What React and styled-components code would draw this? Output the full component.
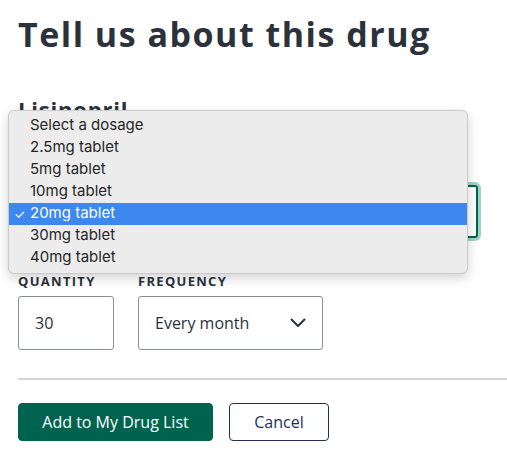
import React from "react";
import styled, { createGlobalStyle } from "styled-components";

const Global = createGlobalStyle`
  html, body { margin: 0; padding: 0; background: #fff; }
  body { font-family: "Open Sans", "Liberation Sans", sans-serif; color: #2b323b; }
  * { box-sizing: border-box; }
`;

const Page = styled.div`
  position: relative;
  width: 507px;
  height: 451px;
  overflow: hidden;
  padding: 14px 0 0 18px;
`;

const Heading = styled.h1`
  margin: 0;
  font-family: "Open Sans", sans-serif;
  font-weight: 700;
  font-size: 34px;
  line-height: 40px;
  letter-spacing: 1.5px;
  color: #2b323b;
`;

const DrugName = styled.h2`
  margin: 42px 0 0 0;
  font-family: "Open Sans", sans-serif;
  font-weight: 700;
  font-size: 22px;
  line-height: 26px;
  letter-spacing: 0.8px;
  color: #2b323b;
`;

const DosageSelect = styled.div`
  margin-top: 63px;
  width: 460px;
  height: 53px;
  border: 2px solid #00634f;
  border-radius: 3px;
  box-shadow: 0 0 0 3px #9fd2c5;
`;

const Row = styled.div`
  display: flex;
  gap: 24px;
  margin-top: 36px;
`;

const Field = styled.div`
  display: flex;
  flex-direction: column;
  gap: 7px;
`;

const Label = styled.div`
  font-family: "Open Sans", sans-serif;
  font-weight: 700;
  font-size: 13px;
  line-height: 15px;
  letter-spacing: 1.3px;
  text-transform: uppercase;
  color: #2b323b;
`;

const Box = styled.div`
  width: ${(p) => p.$w}px;
  height: 54px;
  border: 1px solid #8a8f96;
  border-radius: 3px;
  display: flex;
  align-items: center;
  justify-content: space-between;
  padding: 0 16px 0 16px;
  font-family: "Open Sans", sans-serif;
  font-size: 16px;
  color: #2b323b;
`;

const Divider = styled.hr`
  margin: 28px 0 0 0;
  border: none;
  height: 2px;
  background: #d6d6d6;
`;

const Buttons = styled.div`
  display: flex;
  gap: 16px;
  margin-top: 23px;
`;

const Button = styled.button`
  height: 38px;
  width: ${(p) => p.$w}px;
  border-radius: 4px;
  font-family: "Open Sans", sans-serif;
  font-size: 16px;
  font-weight: 500;
  cursor: pointer;
  border: 1px solid ${(p) => (p.$primary ? "#00634f" : "#1d2f5c")};
  background: ${(p) => (p.$primary ? "#00634f" : "#fff")};
  color: ${(p) => (p.$primary ? "#fff" : "#1d2f5c")};
`;

const Menu = styled.ul`
  position: absolute;
  left: 8px;
  top: 110px;
  width: 460px;
  margin: 0;
  padding: 4px 0 4px;
  list-style: none;
  background: #ececec;
  border: 1px solid rgba(0, 0, 0, 0.14);
  border-radius: 6px;
  box-shadow: 0 4px 12px rgba(0, 0, 0, 0.18);
  font-family: Inter, "Liberation Sans", sans-serif;
  font-size: 15px;
`;

const Item = styled.li`
  position: relative;
  height: 22px;
  line-height: 20px;
  padding-left: 21px;
  color: ${(p) => (p.$selected ? "#fff" : "#262626")};
  background: ${(p) => (p.$selected ? "#3c88ee" : "transparent")};
`;

const Check = styled.span`
  position: absolute;
  left: 5px;
  top: 1px;
  font-size: 13px;
`;

const options = [
  "Select a dosage",
  "2.5mg tablet",
  "5mg tablet",
  "10mg tablet",
  "20mg tablet",
  "30mg tablet",
  "40mg tablet",
];

export default function App() {
  return (
    <Page>
      <Global />
      <Heading>Tell us about this drug</Heading>
      <DrugName>Lisinopril</DrugName>
      <DosageSelect />
      <Row>
        <Field>
          <Label>Quantity</Label>
          <Box $w={96}>30</Box>
        </Field>
        <Field>
          <Label>Frequency</Label>
          <Box $w={185}>
            Every month
            <svg width="16" height="10" viewBox="0 0 16 10" fill="none">
              <path d="M1.5 1.5 L8 8 L14.5 1.5" stroke="#2b323b" strokeWidth="2" strokeLinecap="round" strokeLinejoin="round" />
            </svg>
          </Box>
        </Field>
      </Row>
      <Divider />
      <Buttons>
        <Button $primary $w={195}>Add to My Drug List</Button>
        <Button $w={100}>Cancel</Button>
      </Buttons>
      <Menu>
        {options.map((o, i) => (
          <Item key={o} $selected={i === 4}>
            {i === 4 && <Check>✓</Check>}
            {o}
          </Item>
        ))}
      </Menu>
    </Page>
  );
}
